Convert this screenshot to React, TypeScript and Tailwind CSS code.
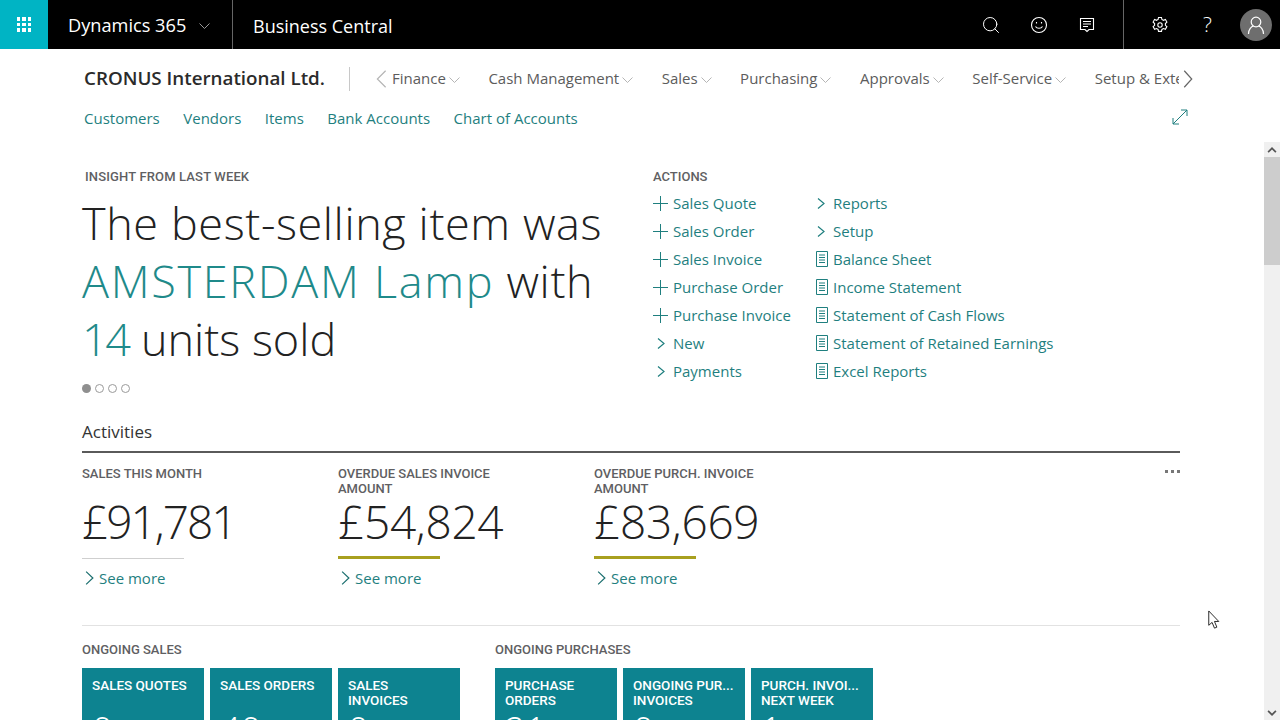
import React from "react";
import { Search } from "lucide-react";

const sans = "font-['Open_Sans','Noto_Sans',sans-serif]";
const din = "font-['Roboto','Liberation_Sans',sans-serif]";

const menu = ["Finance", "Cash Management", "Sales", "Purchasing", "Approvals", "Self-Service"];
const quick = ["Customers", "Vendors", "Items", "Bank Accounts", "Chart of Accounts"];
const col1 = ["Sales Quote", "Sales Order", "Sales Invoice", "Purchase Order", "Purchase Invoice"];
const col2 = ["Balance Sheet", "Income Statement", "Statement of Cash Flows", "Statement of Retained Earnings", "Excel Reports"];

const ReportIcon = () => (
  <svg viewBox="0 0 14 16" className="h-4 w-[14px] shrink-0" fill="none" stroke="currentColor" strokeWidth="1">
    <path d="M1.500 .5h11v15h-11zM4 4h6M4 6.500h6M4 9h6M4 11.500h6" />
  </svg>
);

const PlusIcon = () => (
  <svg viewBox="0 0 15 15" className="h-[15px] w-[15px] shrink-0" fill="none" stroke="currentColor" strokeWidth="1">
    <path d="M7.500 0v15M0 7.500h15" />
  </svg>
);

const Caret = ({ className }: { className: string }) => (
  <svg viewBox="0 0 11 6" className={`h-[6px] w-[11px] shrink-0 ${className}`} fill="none" stroke="currentColor" strokeWidth="1">
    <path d="M.5 .5l5 5 5-5" />
  </svg>
);

const Arrow = ({ className }: { className: string }) => (
  <svg viewBox="0 0 8 12" preserveAspectRatio="none" className={`shrink-0 ${className}`} fill="none" stroke="currentColor" strokeWidth="1.200">
    <path d="M1 .5l6 5.500-6 5.500" vectorEffect="non-scaling-stroke" />
  </svg>
);

const Kpi = ({ title, value, warn, narrow }: { title: React.ReactNode; value: string; warn?: boolean; narrow?: boolean }) => (
  <div className="w-[256px]">
    <div className={`${din} h-[30px] w-[190px] text-[13px] leading-[15px] font-medium text-[#5f5f63] uppercase`}>{title}</div>
    <div className={`${sans} h-[50px] text-[46px] leading-[50px] font-light text-[#222] ${narrow ? "tracking-[-2px]" : "tracking-[-0.300px]"}`}>{value}</div>
    <div className={warn ? "mt-[10px] h-[3px] w-[102px] bg-[#a8a01f]" : "mt-[12px] mb-[1px] h-px w-[102px] bg-[#cfcfcf]"} />
    <div className="mt-[9px] flex items-center pl-[3px] text-[15px] leading-5 text-[#1f7f7f]">
      <Arrow className="h-[14px] w-[9px] text-[#1b6f6f]" />
      <span className="ml-[5px]">See more</span>
    </div>
  </div>
);

const Tile = ({ label, num }: { label: React.ReactNode; num: string }) => (
  <div className="h-[70px] w-[122px] overflow-hidden bg-[#0d8390] px-[10px] pt-[10px] text-white">
    <div className={`${din} h-[32px] text-[13.500px] leading-[15px] font-medium whitespace-nowrap uppercase`}>{label}</div>
    <div className={`${sans} text-[36px] leading-[40px] font-light`}>{num}</div>
  </div>
);

export default function App() {
  return (
    <div className={`${sans} flex h-[720px] w-[1280px] flex-col overflow-hidden bg-white`}>
      <header className="flex h-[49px] shrink-0 items-center bg-black text-white">
        <div className="flex h-full w-[48px] items-center justify-center bg-[#00b4c4]">
          <div className="grid grid-cols-3 gap-[2px]">
            {Array.from({ length: 9 }).map((_, i) => (
              <div key={i} className="h-[3.500px] w-[3.500px] bg-white" />
            ))}
          </div>
        </div>
        <div className="flex h-full w-[185px] items-center border-r border-[#666] pl-[20px]">
          <span className="pt-[3px] text-[18.200px]">Dynamics 365</span>
          <Caret className="mt-[3px] ml-[13px] text-[#999]" />
        </div>
        <span className="ml-[20px] pt-[3px] text-[18px]">Business Central</span>
        <div className="ml-auto flex h-full items-center">
          <div className="flex items-center gap-[28px] pr-[26px]">
            <Search size={20} strokeWidth={1.2} />
            <svg viewBox="0 0 20 20" className="h-5 w-5" fill="none" stroke="currentColor" strokeWidth="1.100">
              <circle cx="10" cy="10" r="7.500" />
              <path d="M6.500 11.500c1.500 2.400 5.500 2.400 7 0" />
              <path d="M7.500 7v1.500M12.500 7v1.500" />
            </svg>
            <svg viewBox="0 0 20 20" className="h-5 w-5" fill="none" stroke="currentColor" strokeWidth="1.100">
              <path d="M3.500 3.500h13v11h-4.500l-2 2-2-2H3.500z" />
              <path d="M6 6.500h8M6 9h8M6 11.500h5" />
            </svg>
          </div>
          <div className="flex h-full items-center border-l border-[#666] pl-[26px]">
            <svg viewBox="0 0 20 20" className="h-5 w-5" fill="none" stroke="currentColor" strokeWidth="1.100">
              <path d="M8.500 2.500h3l.4 2 1.600.8 1.900-.8 1.500 2.600-1.500 1.400v1.800l1.500 1.300-1.500 2.600-1.900-.7-1.600.9-.4 2h-3l-.4-2-1.600-.9-1.900.7-1.500-2.600 1.500-1.300V8.500L3.100 7.100l1.500-2.600 1.900.8 1.600-.8z" />
              <circle cx="10" cy="10" r="2.200" />
            </svg>
            <span className="ml-[33px] w-[11px] text-[21px] leading-none font-light">?</span>
            <div className="mr-[8px] ml-[26px] flex h-[32px] w-[32px] items-center justify-center rounded-full bg-[#6e6e6e]">
              <svg viewBox="0 0 20 20" className="h-5 w-5" fill="none" stroke="#fff" strokeWidth="1.200">
                <circle cx="10" cy="7" r="4.800" />
                <path d="M2.500 19c0-5 3-7.500 5-7.800M17.500 19c0-5-3-7.500-5-7.800" />
              </svg>
            </div>
          </div>
        </div>
      </header>

      <nav className="ml-[84px] flex h-[59px] w-[1109px] shrink-0 items-center">
        <span className="w-[241px] pb-[2px] text-[18.800px] leading-6 font-semibold whitespace-nowrap text-[#2b2b2b]">CRONUS International Ltd.</span>
        <div className="ml-[24px] h-[24px] w-px shrink-0 bg-[#c8c8c8]" />
        <Arrow className="ml-[26px] h-[18px] w-[11px] -scale-x-100 text-[#b5b5b5]" />
        <div className="ml-[5px] flex min-w-0 flex-1 items-center gap-[28.500px] overflow-hidden text-[15px] whitespace-nowrap text-[#5c5c5c]">
          {menu.map((m) => (
            <span key={m} className="flex items-center gap-[3px]">
              {m}
              <Caret className="mt-[2px] text-[#b5b5b5]" />
            </span>
          ))}
          <span>Setup &amp; Extensions</span>
        </div>
        <Arrow className="ml-[4px] h-[18px] w-[10px] text-[#666]" />
      </nav>

      <div className="flex h-[34px] w-[1188px] shrink-0 items-start gap-[23.500px] pl-[84px] text-[15px] leading-5 text-[#1f7f7f]">
        {quick.map((q) => (
          <span key={q}>{q}</span>
        ))}
        <svg viewBox="0 0 16 16" className="mt-[1px] ml-auto h-4 w-4" fill="none" stroke="currentColor" strokeWidth="1">
          <path d="M1 15L15 1M9 1h6v6M1 9v6h6" />
        </svg>
      </div>

      <div className="flex min-h-0 flex-1">
        <main className="min-w-0 flex-1 pl-[82px]">
          <div className="flex h-[280px] pt-[27px]">
            <section className="w-[571px]">
              <div className={`${din} pl-[3px] text-[13px] leading-[15px] font-medium tracking-[0.150px] text-[#5f5f63]`}>INSIGHT FROM LAST WEEK</div>
              <p className="mt-[10px] text-[45px] leading-[58px] font-light tracking-[0.600px] whitespace-nowrap text-[#222]">
                The best-selling item was
                <br />
                <span className="tracking-[1.700px] text-[#1f8a8a]">AMSTERDAM Lamp</span> with
                <br />
                <span className="tracking-[-2.400px] text-[#1f8a8a]">14</span> <span className="tracking-normal">units sold</span>
              </p>
              <div className="mt-[16px] flex items-center gap-[4px]">
                <div className="h-[9px] w-[9px] rounded-full bg-[#8f8f8f]" />
                <div className="h-[9px] w-[9px] rounded-full border border-[#9a9a9a]" />
                <div className="h-[9px] w-[9px] rounded-full border border-[#9a9a9a]" />
                <div className="h-[9px] w-[9px] rounded-full border border-[#9a9a9a]" />
              </div>
            </section>
            <section>
              <div className={`${din} text-[13px] leading-[15px] font-medium text-[#5f5f63]`}>ACTIONS</div>
              <div className="mt-[5px] flex text-[15px] leading-[28px] text-[#1f7f7f]">
                <div className="w-[162px]">
                  {col1.map((a) => (
                    <div key={a} className="flex items-center gap-[5px]">
                      <PlusIcon />
                      {a}
                    </div>
                  ))}
                  {["New", "Payments"].map((a) => (
                    <div key={a} className="flex items-center">
                      <Arrow className="ml-[4px] h-[11px] w-[8px]" />
                      <span className="ml-[8px]">{a}</span>
                    </div>
                  ))}
                </div>
                <div>
                  {["Reports", "Setup"].map((a) => (
                    <div key={a} className="flex items-center">
                      <Arrow className="ml-[2px] h-[11px] w-[8px]" />
                      <span className="ml-[8px]">{a}</span>
                    </div>
                  ))}
                  {col2.map((a) => (
                    <div key={a} className="flex items-center gap-[4px]">
                      <ReportIcon />
                      {a}
                    </div>
                  ))}
                </div>
              </div>
            </section>
          </div>

          <div className="relative w-[1098px]">
            <div className="flex h-[20px] items-center text-[17px] text-[#333]">Activities</div>
            <div className="mt-[9px] h-[2px] bg-[#5a5a5a]" />
            <div className="mt-[13px] flex">
              <Kpi title="Sales This Month" value="£91,781" narrow />
              <Kpi title="Overdue Sales Invoice Amount" value="£54,824" warn />
              <Kpi title="Overdue Purch. Invoice Amount" value="£83,669" warn />
            </div>
            <div className="absolute top-[48px] right-0 flex gap-[3px]">
              <div className="h-[3px] w-[3px] bg-[#777]" />
              <div className="h-[3px] w-[3px] bg-[#777]" />
              <div className="h-[3px] w-[3px] bg-[#777]" />
            </div>
            <div className="mt-[37px] h-px bg-[#e2e2e2]" />
          </div>

          <div className="mt-[16px] flex gap-[35px]">
            <div>
              <div className={`${din} text-[13px] leading-[15px] font-medium text-[#5f5f63]`}>ONGOING SALES</div>
              <div className="mt-[11px] flex gap-[6px]">
                <Tile label="Sales Quotes" num="0" />
                <Tile label="Sales Orders" num="40" />
                <Tile label={<>Sales<br />Invoices</>} num="0" />
              </div>
            </div>
            <div>
              <div className={`${din} text-[13px] leading-[15px] font-medium text-[#5f5f63]`}>ONGOING PURCHASES</div>
              <div className="mt-[11px] flex gap-[6px]">
                <Tile label={<>Purchase<br />Orders</>} num="21" />
                <Tile label={<>Ongoing Pur...<br />Invoices</>} num="0" />
                <Tile label={<>Purch. Invoi...<br />Next Week</>} num="1" />
              </div>
            </div>
          </div>
        </main>

        <aside className="flex w-[16px] shrink-0 flex-col bg-[#f0f0f0]">
          <div className="flex h-[15px] items-center justify-center">
            <svg viewBox="0 0 10 8" className="h-2 w-[10px]" fill="#555"><path d="M5 1l4.500 4.500-1.200 1.200L5 3.400 1.700 6.700.5 5.500z" /></svg>
          </div>
          <div className="h-[108px] bg-[#cdcdcd]" />
          <div className="mt-auto flex h-[15px] items-center justify-center">
            <svg viewBox="0 0 10 8" className="h-2 w-[10px]" fill="#555"><path d="M5 7L.5 2.500 1.700 1.300 5 4.600 8.300 1.300 9.500 2.500z" /></svg>
          </div>
        </aside>
      </div>

      <svg viewBox="0 0 14 22" className="absolute top-[610px] left-[1207px] h-[21px] w-[14px]" fill="#fff" stroke="#222" strokeWidth="1">
        <path d="M1.500 1v15l3.500-3 2.500 6 2.500-1-2.500-6h4.500z" />
      </svg>
    </div>
  );
}
